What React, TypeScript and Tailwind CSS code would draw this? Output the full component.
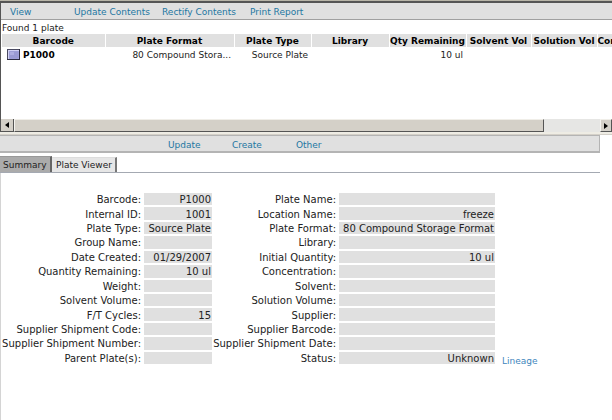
import React from "react";

const columns = [
  { name: "Barcode", style: "w-[103px] text-center" },
  { name: "Plate Format", style: "w-[129px] text-center" },
  { name: "Plate Type", style: "w-[77px] text-center" },
  { name: "Library", style: "w-[78px] text-center" },
  { name: "Qty Remaining", style: "w-[77px] text-center" },
  { name: "Solvent Vol", style: "w-[65px] text-center" },
  { name: "Solution Vol", style: "w-[66px] text-center" },
  { name: "Con", style: "w-[64px] text-left" },
];

const leftFields: [string, string][] = [
  ["Barcode", "P1000"],
  ["Internal ID", "1001"],
  ["Plate Type", "Source Plate"],
  ["Group Name", ""],
  ["Date Created", "01/29/2007"],
  ["Quantity Remaining", "10 ul"],
  ["Weight", ""],
  ["Solvent Volume", ""],
  ["F/T Cycles", "15"],
  ["Supplier Shipment Code", ""],
  ["Supplier Shipment Number", ""],
  ["Parent Plate(s)", ""],
];

const rightFields: [string, string][] = [
  ["Plate Name", ""],
  ["Location Name", "freeze"],
  ["Plate Format", "80 Compound Storage Format"],
  ["Library", ""],
  ["Initial Quantity", "10 ul"],
  ["Concentration", ""],
  ["Solvent", ""],
  ["Solution Volume", ""],
  ["Supplier", ""],
  ["Supplier Barcode", ""],
  ["Supplier Shipment Date", ""],
  ["Status", "Unknown"],
];

function PlateIcon() {
  return (
    <svg width="13" height="11" viewBox="0 0 13 11" className="shrink-0" aria-hidden="true">
      <rect x="0.5" y="0.5" width="12" height="10" fill="#a4a4dc" stroke="#4a4a62" />
      <path d="M1 1h11v1H1zM1 1h1v9H1z" fill="#d2d2f4" />
      <path d="M3 3h4v3H3z" fill="#c2c2f0" />
      <path d="M4 2v8M6 2v8M8 2v8M10 2v8M2 4h10M2 6h10M2 8h10" stroke="#8888c4" strokeWidth="0.4" />
      <path d="M0 10h13v1H0zM12 0h1v11h-1z" fill="#2c2c40" />
    </svg>
  );
}

function Fields({ items, columnsClass }: { items: [string, string][]; columnsClass: string }) {
  return (
    <dl className={`grid h-[171px] auto-rows-fr gap-y-[2px] text-[10px] ${columnsClass}`}>
      {items.map(([label, value]) => (
        <React.Fragment key={label}>
          <dt className="flex h-full min-h-0 items-center justify-end whitespace-nowrap pt-[2px]">{label}:</dt>
          <dd className="ml-[3px] flex h-full min-h-0 items-center justify-end whitespace-nowrap bg-[#e0e0e0] pr-px pt-[2px]">{value}</dd>
        </React.Fragment>
      ))}
    </dl>
  );
}

export default function App() {
  return (
    <div className="flex min-h-screen flex-col overflow-hidden bg-white font-['DejaVu_Sans',Verdana,sans-serif] text-[9px] leading-[12px] text-[#222]">
      <section className="border-t border-[#b8b5a8]">
        <div className="border-l border-t-2 border-[#555]">
          <nav className="flex h-[17px] items-center border-b border-[#a0a0a0] bg-[#e0e0e0] pl-[9px] pt-[2px] text-[#2377a2]">
            <button className="w-[64px] text-left">View</button>
            <button className="w-[88px] whitespace-nowrap text-left">Update Contents</button>
            <button className="w-[88px] whitespace-nowrap text-left">Rectify Contents</button>
            <button className="whitespace-nowrap text-left">Print Report</button>
          </nav>
          <div className="h-[99px] overflow-hidden pl-px">
            <p className="h-[14px] pt-[2px]">Found 1 plate</p>
            <table className="w-[659px] table-fixed border-collapse">
              <thead>
                <tr className="h-[13px]">
                  {columns.map((c) => (
                    <th key={c.name} className={`${c.style} whitespace-nowrap border-r border-white bg-[#e0e0e0] p-0 font-bold text-black`}>
                      {c.name}
                    </th>
                  ))}
                </tr>
              </thead>
              <tbody>
                <tr className="h-[15px]">
                  <td className="p-0 pl-[5px] font-bold text-black">
                    <span className="flex items-center gap-[3px]">
                      <PlateIcon />
                      P1000
                    </span>
                  </td>
                  <td className="whitespace-nowrap p-0 pr-[3px] text-right">80 Compound Stora...</td>
                  <td className="whitespace-nowrap p-0 pr-[3px] text-right">Source Plate</td>
                  <td />
                  <td className="p-0 pr-[3px] text-right">10 ul</td>
                  <td />
                  <td />
                  <td />
                </tr>
              </tbody>
            </table>
          </div>
          <div className="flex h-[13px] bg-[#e6e6e4]">
            <button aria-label="Scroll left" className="flex w-[13px] items-center justify-center border-b border-r border-b-[#555] border-r-[#555] bg-[#d4d0c8]">
              <svg width="4" height="6" viewBox="0 0 4 6" aria-hidden="true"><path d="M4 0v6L0 3z" fill="#000" /></svg>
            </button>
            <div className="flex min-w-0 flex-1">
              <div className="w-[calc(100%-56px)] border-b border-l border-r border-t border-b-[#555] border-l-[#f5f4f0] border-r-[#555] border-t-[#f0eee8] bg-[#d4d0c8]" />
            </div>
            <button aria-label="Scroll right" className="flex w-[12px] items-center justify-center border border-b-[#555] border-l-[#f5f4f0] border-r-[#555] border-t-[#f0eee8] bg-[#d4d0c8]">
              <svg width="4" height="6" viewBox="0 0 4 6" aria-hidden="true"><path d="M0 0v6l4-3z" fill="#000" /></svg>
            </button>
          </div>
        </div>
        <div className="h-[3px] border-b border-[#d4d0c8] bg-[#eeece4]" />
      </section>

      <section className="mr-[12px]">
        <nav className="flex h-[18px] items-center border-b-2 border-r border-t border-[#b4b4b4] bg-[#e0e0e0] pl-[168px] pt-[2px] text-[#2377a2]">
          <button className="w-[64px] text-left">Update</button>
          <button className="w-[64px] text-left">Create</button>
          <button className="text-left">Other</button>
        </nav>
        <div role="tablist" className="mt-[3px] flex h-[17px] items-end border-b border-[#a4a9b2]">
          <button role="tab" aria-selected="true" className="h-[16px] w-[52px] whitespace-nowrap border-r-2 border-t border-r-[#666] border-t-[#999] bg-[#ababab] pl-[3px] text-left">
            Summary
          </button>
          <button role="tab" aria-selected="false" className="h-[15px] w-[65px] whitespace-nowrap border-r-2 border-t border-r-[#777] border-t-[#ddd] bg-[#e6e6e6] pl-[4px] text-left">
            Plate Viewer
          </button>
        </div>
      </section>

      <main className="flex flex-1 items-start shadow-[inset_1px_0_0_#d4d4d4]">
        <div className="flex items-end pt-[20px]">
          <Fields items={leftFields} columnsClass="grid-cols-[141px_71px]" />
          <Fields items={rightFields} columnsClass="grid-cols-[124px_159px]" />
          <a href="#lineage" className="ml-[7px] text-[9px] leading-[6px] text-[#4186bd]">Lineage</a>
        </div>
      </main>
    </div>
  );
}
